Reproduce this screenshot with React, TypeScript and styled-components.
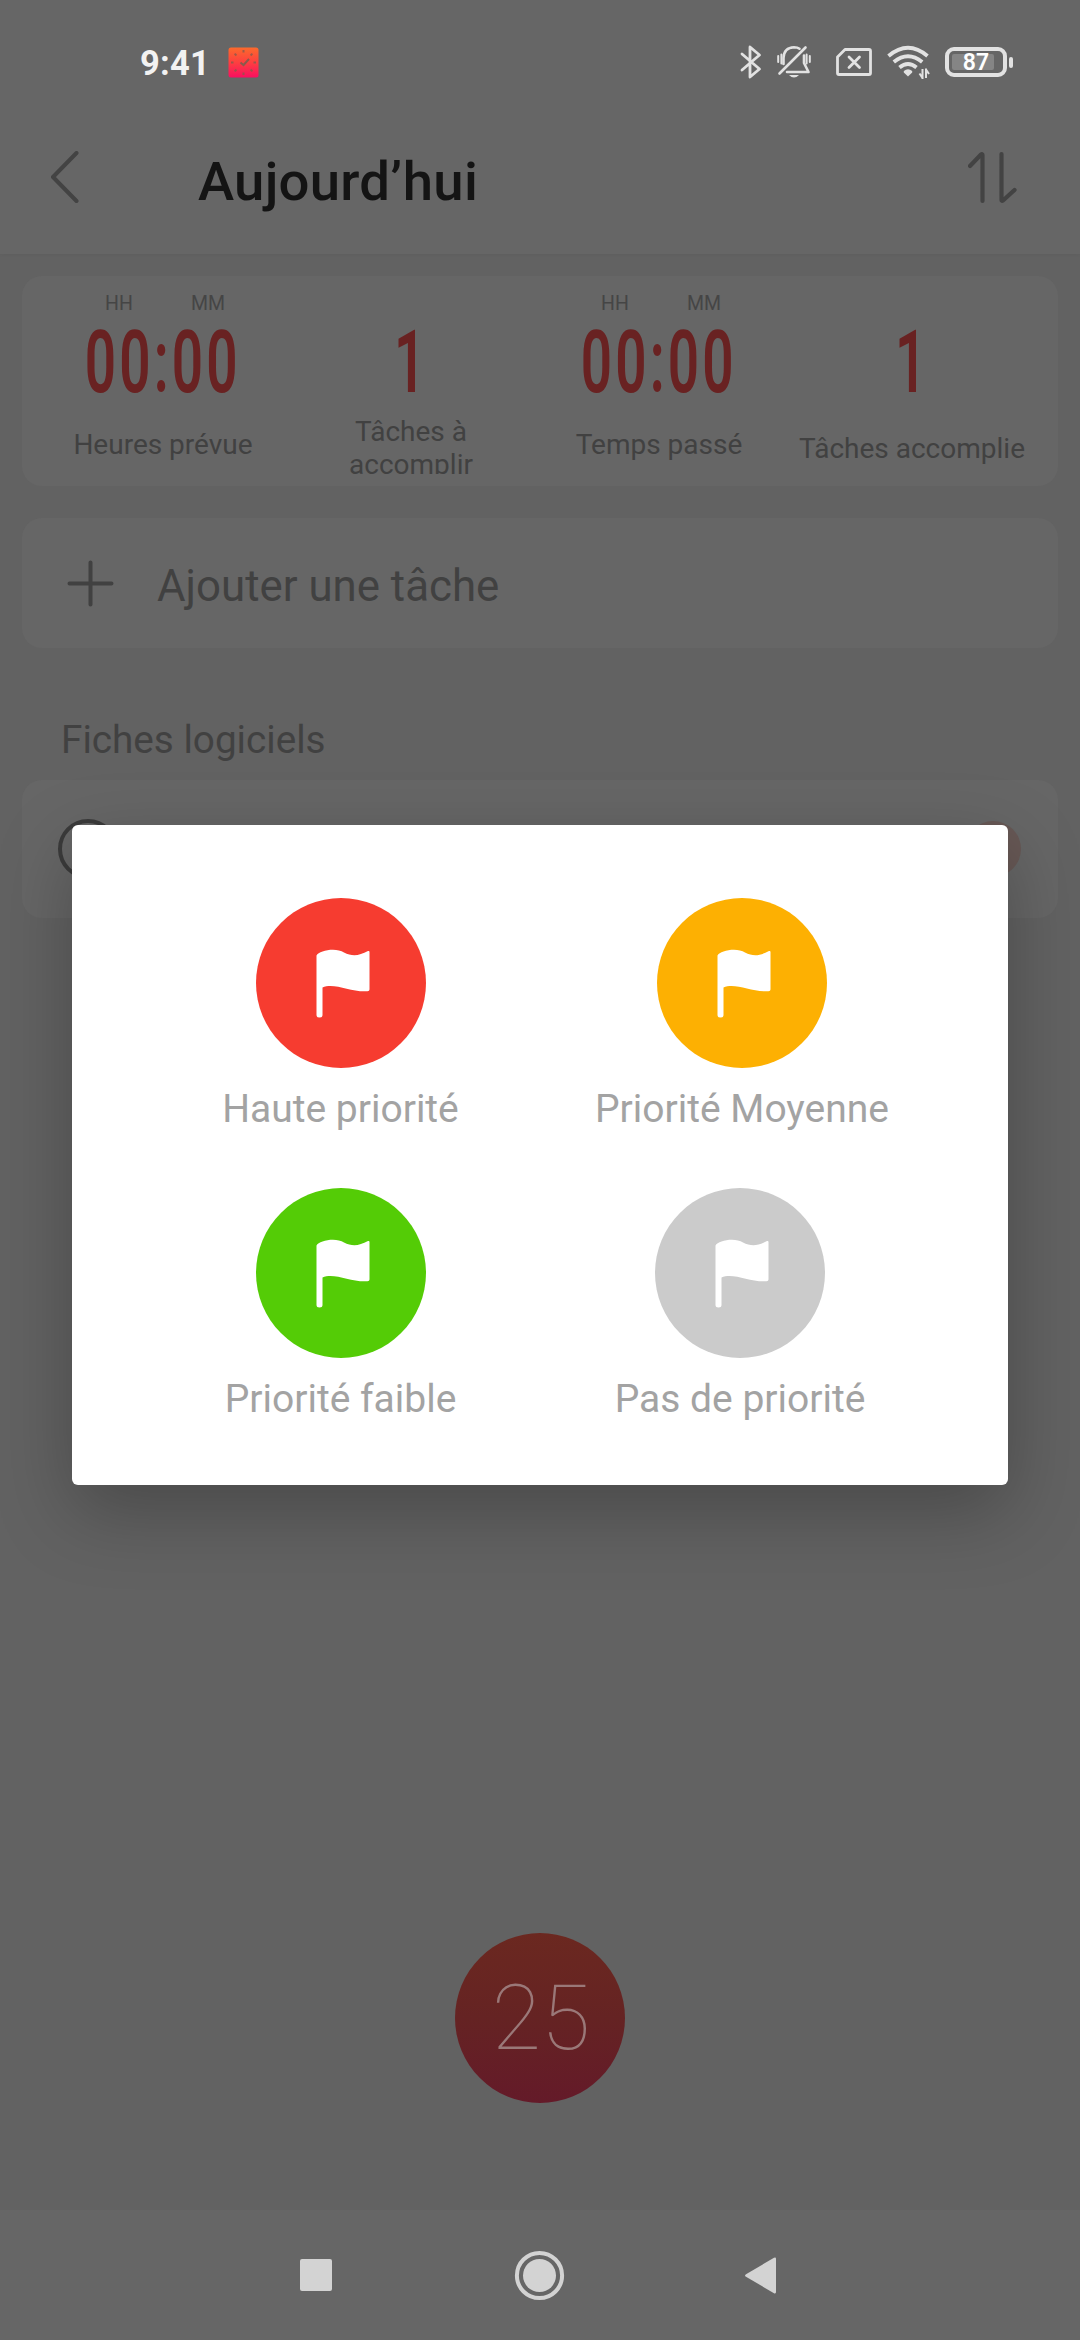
import React from "react";
import styled, { createGlobalStyle } from "styled-components";

const GlobalStyle = createGlobalStyle`
  * { box-sizing: border-box; }
  body { margin: 0; background: #616161; font-family: Roboto, "Noto Sans", sans-serif; }
`;

const Screen = styled.div`
  position: relative;
  display: flex;
  flex-direction: column;
  width: 1080px;
  height: 2340px;
  overflow: hidden;
  background: #626262;
  color: #414141;
`;

const TopArea = styled.header`
  height: 254px;
  background: #666;
  box-shadow: 0 0 4px rgba(0, 0, 0, 0.06);
`;

const StatusBar = styled.div`
  display: flex;
  align-items: center;
  height: 124px;
  padding: 0 67px 0 140px;
`;

const Clock = styled.span`
  font-size: 34.5px;
  font-weight: 700;
  line-height: 40px;
  letter-spacing: 0.2px;
  color: #f2f2f2;
  width: 88px;
  padding-top: 2px;
`;

const StatusIcons = styled.div`
  display: flex;
  align-items: center;
  margin-left: auto;
`;

const StatusSvg = styled.svg<{ $gap?: number }>`
  display: block;
  margin-right: ${(p) => p.$gap ?? 0}px;
`;

const Battery = styled.div`
  display: flex;
  align-items: center;
  gap: 2px;
`;

const BatteryBody = styled.div`
  display: flex;
  width: 62px;
  height: 30px;
  padding: 3px;
  border: 4px solid #e2e2e2;
  border-radius: 9px;
`;

const BatteryLevel = styled.div`
  flex: 1;
  display: flex;
  align-items: center;
  justify-content: center;
  margin-right: 6px;
  padding: 2px 0 0 6px;
  border-radius: 2px;
  background: #858585;
  font-size: 23px;
  font-weight: 600;
  line-height: 16px;
  color: #fff;
`;

const BatteryTip = styled.div`
  width: 4px;
  height: 11px;
  border-radius: 2px;
  background: #e2e2e2;
`;

const TitleBar = styled.div`
  display: flex;
  align-items: center;
  height: 108px;
  padding: 0 62px 0 49px;
`;

const Title = styled.h1`
  flex: 1;
  margin: 0 0 0 117px;
  padding-top: 5px;
  font-size: 54.5px;
  font-weight: 500;
  line-height: 64px;
  letter-spacing: 0.25px;
  color: #141414;
`;

const Content = styled.main`
  flex: 1;
  display: flex;
  flex-direction: column;
  padding: 22px 22px 0;
`;

const Card = styled.section`
  background: #666;
  border-radius: 20px;
`;

const StatsCard = styled(Card)`
  display: grid;
  grid-template-columns: 248px 248px 248px 258px;
  height: 210px;
  padding-left: 17px;
`;

const Stat = styled.div`
  display: flex;
  flex-direction: column;
  align-items: center;
  height: 198px;
  overflow: hidden;

  > * { flex-shrink: 0; }
`;

const Units = styled.div`
  display: flex;
  justify-content: center;
  gap: 58px;
  height: 44px;
  padding: 16px 0 0 4px;
  font-size: 19.5px;
  line-height: 23px;
  color: #454545;
`;

const Digits = styled.div`
  display: flex;
  align-items: center;
  height: 84px;
  font-size: 87px;
  font-weight: 600;
  line-height: 84px;
  letter-spacing: 5px;
  color: #692222;
  transform: scaleX(0.63);
`;

const StatLabel = styled.div<{ $top: number }>`
  width: 230px;
  padding-top: ${(p) => p.$top}px;
  font-size: 28px;
  line-height: 33px;
  text-align: center;
`;

const AddCard = styled(Card)`
  display: flex;
  align-items: center;
  height: 130px;
  margin-top: 32px;
  padding-left: 45px;
  font-size: 43.8px;
  line-height: 52px;
`;

const AddText = styled.span`
  margin-left: 43px;
  padding-top: 6px;
`;

const SectionTitle = styled.h2`
  margin: 69px 0 0 39px;
  height: 63px;
  font-size: 38.7px;
  font-weight: 400;
  line-height: 46px;
`;

const TaskCard = styled(Card)`
  display: flex;
  align-items: center;
  justify-content: space-between;
  height: 138px;
  padding: 0 37px 0 36px;
`;

const Checkbox = styled.div`
  width: 60px;
  height: 60px;
  border: 4px solid #3b3b3b;
  border-radius: 50%;
`;

const PlayButton = styled.div`
  width: 56px;
  height: 56px;
  border-radius: 50%;
  background: #675855;
`;

const TimerButton = styled.div`
  display: flex;
  align-items: center;
  justify-content: center;
  align-self: center;
  width: 170px;
  height: 170px;
  margin: auto 0 107px;
  padding: 2px 0 0 2px;
  border-radius: 50%;
  background: linear-gradient(#6b2820, #652323 50%, #641a29);
  font-size: 90px;
  font-weight: 100;
  line-height: 106px;
  color: #9a7878;
`;

const NavBar = styled.nav`
  display: flex;
  align-items: center;
  height: 130px;
  padding-left: 300px;
  background: #666;
`;

const Dialog = styled.div`
  position: absolute;
  top: 825px;
  left: 72px;
  width: 936px;
  height: 660px;
  display: grid;
  grid-template-columns: 401px 401px;
  grid-template-rows: 290px 290px;
  padding: 73px 0 0 68px;
  background: #fff;
  border-radius: 6px;
  box-shadow: 0 26px 76px rgba(0, 0, 0, 0.26);
`;

const Priority = styled.div<{ $shift?: number }>`
  display: flex;
  flex-direction: column;
  align-items: center;
  margin-left: ${(p) => p.$shift ?? 0}px;
`;

const FlagCircle = styled.div<{ $color: string }>`
  display: flex;
  align-items: center;
  justify-content: center;
  width: 170px;
  height: 170px;
  padding: 2px 0 0 4px;
  border-radius: 50%;
  background: ${(p) => p.$color};
`;

const PriorityLabel = styled.span`
  margin-top: 18px;
  font-size: 39px;
  line-height: 46px;
  color: #a3a3a3;
  white-space: nowrap;
`;

const stats = [
  { value: "00:00", units: true, label: "Heures prévue", top: 24 },
  { value: "1", units: false, label: "Tâches à accomplir", top: 11 },
  { value: "00:00", units: true, label: "Temps passé", top: 24 },
  { value: "1", units: false, label: "Tâches accomplie", top: 28 },
];

const priorities = [
  { label: "Haute priorité", color: "#f63c30", shift: 0 },
  { label: "Priorité Moyenne", color: "#fdb002", shift: 1 },
  { label: "Priorité faible", color: "#54cc06", shift: 0 },
  { label: "Pas de priorité", color: "#cbcbcb", shift: -3 },
];

const ticks = [0, 45, 90, 135, 180, 225, 270, 315];

function AppBadge() {
  return (
    <StatusSvg width="31" height="31" viewBox="0 0 31 31">
      <defs>
        <linearGradient id="badge" x1="0" y1="0" x2="0" y2="1">
          <stop offset="0" stopColor="#fb6a2c" />
          <stop offset="0.5" stopColor="#fd3f40" />
          <stop offset="1" stopColor="#f80f60" />
        </linearGradient>
      </defs>
      <rect x="0.5" y="0.5" width="30" height="30" rx="2.5" fill="url(#badge)" />
      <g stroke="#8a5a4c" strokeWidth="2" opacity="0.8">
        {ticks.map((a) => (
          <path key={a} d="M15.5 3v2.5" transform={`rotate(${a} 15.5 15.5)`} />
        ))}
      </g>
      <path d="M12.5 15.5l3 2.5 5.5-6" fill="none" stroke="#8a5a4c" strokeWidth="2" />
    </StatusSvg>
  );
}

function Flag() {
  return (
    <svg width="54" height="70" viewBox="0 0 54 70">
      <path
        fill="#fff"
        d="M0.5 6.500C3 1.500 20 -2 28 3.500C36 7.500 43 7 52 2Q53.500 1.500 53.500 3V40.500Q53.500 42 51.500 42.200C35 43.500 18 33 6.500 38.500V66Q6.500 68.500 3.500 68.500Q0.500 68.500 0.500 66Z"
      />
    </svg>
  );
}

export default function App() {
  return (
    <Screen>
      <GlobalStyle />
      <TopArea>
        <StatusBar>
          <Clock>9:41</Clock>
          <AppBadge />
          <StatusIcons>
            <StatusSvg $gap={15} width="22" height="34" viewBox="0 0 22 34" fill="none" stroke="#e2e2e2" strokeWidth="2.8" strokeLinejoin="round" strokeLinecap="round">
              <path d="M2 9L19.500 24L10 32V2L19.500 10L2 25" />
            </StatusSvg>
            <StatusSvg $gap={25} width="34" height="34" viewBox="0 0 34 34" fill="none" stroke="#e2e2e2" strokeWidth="2.6" strokeLinecap="round" strokeLinejoin="round">
              <path d="M6.500 19V13Q7 2.500 17 2.200Q20.500 2.200 22.500 3.700M27 10.500V18L31.500 27H10M2.500 28.500L28.500 2.500" />
              <path strokeWidth="2" d="M1.200 11v6M4.400 9.500v9M29.600 9.500v9M32.800 11v6" />
              <path d="M12 30h10q-5 5-10 0z" fill="#e2e2e2" stroke="none" />
            </StatusSvg>
            <StatusSvg $gap={15} width="36" height="28" viewBox="0 0 36 28" fill="none" stroke="#e2e2e2" strokeWidth="2.8" strokeLinejoin="round">
              <path d="M9 1.500H33Q34.500 1.500 34.500 3V25Q34.500 26.500 33 26.500H3Q1.500 26.500 1.500 25V9Z" />
              <path d="M13 9l10.500 10.500M23.500 9L13 19.500" strokeLinecap="round" />
            </StatusSvg>
            <StatusSvg $gap={15} width="43" height="34" viewBox="0 0 43 34" fill="none" stroke="#e2e2e2" strokeWidth="3.800">
              <path d="M1.500 11Q21 -5.500 40.500 11M6.800 17Q21 5.500 35.200 17M12.500 22.500Q21 15.500 29.500 22.500" />
              <path d="M16.800 26q4.200-3.500 8.400 0v1.500L21 31.500l-4.200-4z" fill="#e2e2e2" stroke="none" />
              <path d="M35.500 24v10M39 33V23.500M35.500 33l-3-4.500M39 24.500l3 4.500" strokeWidth="2" />
            </StatusSvg>
            <Battery>
              <BatteryBody>
                <BatteryLevel>87</BatteryLevel>
              </BatteryBody>
              <BatteryTip />
            </Battery>
          </StatusIcons>
        </StatusBar>
        <TitleBar>
          <svg width="32" height="54" viewBox="0 0 32 54" fill="none" stroke="#434343" strokeWidth="4" strokeLinecap="round" strokeLinejoin="round">
            <path d="M27.500 2L4 26L27.500 50" />
          </svg>
          <Title>Aujourd’hui</Title>
          <svg width="50" height="54" viewBox="0 0 50 54" fill="none" stroke="#434343" strokeWidth="4.2" strokeLinecap="round" strokeLinejoin="round">
            <path d="M2 15L13 3.500Q14.500 2.500 14.500 4V50M33.500 3V49Q33.500 50.500 35 49.500L46.500 39" />
          </svg>
        </TitleBar>
      </TopArea>

      <Content>
        <StatsCard>
          {stats.map((s, i) => (
            <Stat key={i}>
              <Units>
                {s.units && (
                  <>
                    <span>HH</span>
                    <span>MM</span>
                  </>
                )}
              </Units>
              <Digits>{s.value}</Digits>
              <StatLabel $top={s.top}>{s.label}</StatLabel>
            </Stat>
          ))}
        </StatsCard>

        <AddCard>
          <svg width="47" height="47" viewBox="0 0 47 47" stroke="#414141" strokeWidth="4" strokeLinecap="round">
            <path d="M23.500 2.500V44.500M2.500 23.500H44.500" />
          </svg>
          <AddText>Ajouter une tâche</AddText>
        </AddCard>

        <SectionTitle>Fiches logiciels</SectionTitle>
        <TaskCard>
          <Checkbox />
          <PlayButton />
        </TaskCard>

        <TimerButton>25</TimerButton>
      </Content>

      <NavBar>
        <svg width="480" height="52" viewBox="0 0 480 52" fill="#d3d3d3">
          <rect x="0" y="10" width="32" height="32" rx="2" />
          <circle cx="239.500" cy="26.500" r="16.500" />
          <circle cx="239.500" cy="26.500" r="22.600" fill="none" stroke="#d3d3d3" strokeWidth="4" />
          <path d="M446 25.200L474 8.800Q476 8 476 10V43Q476 45 474 44.200L446 27.800Q444 26.500 446 25.200Z" />
        </svg>
      </NavBar>

      <Dialog>
        {priorities.map((p) => (
          <Priority key={p.label} $shift={p.shift}>
            <FlagCircle $color={p.color}>
              <Flag />
            </FlagCircle>
            <PriorityLabel>{p.label}</PriorityLabel>
          </Priority>
        ))}
      </Dialog>
    </Screen>
  );
}
